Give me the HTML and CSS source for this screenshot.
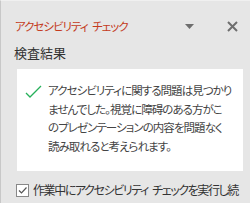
FILE: index.html
```html
<!DOCTYPE html>
<html lang="ja">
<head>
<meta charset="utf-8">
<link rel="stylesheet" href="styles.css">
</head>
<body>
<div class="pane">
  <div class="header">
    <span class="title">アクセシビリティ <span class="word">チェック</span></span>
    <span class="actions">
      <svg class="menu" width="10" height="5" viewBox="0 0 10 5"><path d="M0 0H9L4.5 5Z" fill="#6e6e6e"/></svg>
      <svg class="close" width="11" height="11" viewBox="0 0 11 11"><path d="M1 1L10 10M10 1L1 10" stroke="#6e6e6e" stroke-width="2"/></svg>
    </span>
  </div>
  <div class="section">検査結果</div>
  <div class="result">
    <svg class="check" width="17" height="14" viewBox="0 0 17 14"><path d="M1 9L5 13L16 2" fill="none" stroke="#26b05a" stroke-width="1.3"/></svg>
    <p class="msg">アクセシビリティに関する問題は見つかり<br>ませんでした。視覚に障碍のある方がこ<br>のプレゼンテーションの内容を問題なく<br>読み取れると考えられます。</p>
  </div>
  <label class="option">
    <span class="box"><svg width="11" height="11" viewBox="0 0 11 11"><path d="M2 5.5L4.5 8L9.5 2.5" fill="none" stroke="#555" stroke-width="1.2"/></svg></span>
    <span class="opt-text">作業中にアクセシビリティ <span class="word">チェックを実行し続</span></span>
  </label>
</div>
</body>
</html>
```

FILE: styles.css
```css
html, body {
  margin: 0;
  padding: 0;
}
body {
  width: 250px;
  height: 203px;
  overflow: hidden;
  background: #e6e6e6;
  font-family: "Noto Sans CJK JP", "Noto Sans", sans-serif;
  font-feature-settings: "palt";
  color: #333;
}
.pane {
  box-sizing: border-box;
  height: 203px;
  border-left: 1px solid #c8c8c8;
  border-top: 1px solid #f0f0f0;
  display: flex;
  flex-direction: column;
}
.header {
  display: flex;
  align-items: center;
  justify-content: space-between;
  height: 18px;
  margin-top: 16px;
  padding-left: 14px;
  padding-right: 12px;
}
.title {
  color: #c43b1d;
  font-size: 11.5px;
  line-height: 18px;
  letter-spacing: -1px;
  white-space: nowrap;
}
.word {
  margin-left: 3px;
}
.actions {
  display: flex;
  align-items: center;
  gap: 32px;
}
.menu, .close { display: block; }
.section {
  margin-top: 9px;
  padding-left: 13px;
  font-size: 13px;
  line-height: 18px;
  color: #333;
}
.result {
  box-sizing: border-box;
  margin: 7px 0 0 16px;
  width: 226px;
  height: 102px;
  background: #fff;
  display: flex;
  align-items: flex-start;
  padding: 12px 0 0 8px;
}
.check {
  flex: none;
  margin-top: 3px;
}
.msg {
  margin: 0 0 0 6px;
  font-size: 11.5px;
  line-height: 18.5px;
  letter-spacing: -0.95px;
  white-space: nowrap;
  color: #444;
}
.option {
  display: flex;
  align-items: center;
  margin-top: 10px;
  padding-left: 15px;
  gap: 4px;
}
.box {
  box-sizing: border-box;
  width: 13px;
  height: 13px;
  border: 1px solid #888;
  background: #fff;
  display: flex;
  align-items: center;
  justify-content: center;
}
.box svg { display: block; }
.opt-text {
  font-size: 12px;
  line-height: 18px;
  letter-spacing: -1.4px;
  white-space: nowrap;
  color: #333;
}
```
